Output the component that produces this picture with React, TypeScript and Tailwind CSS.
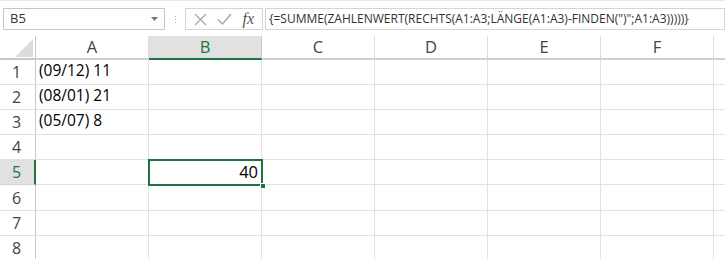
import React from "react";

const COLS = ["A", "B", "C", "D", "E", "F", "G"];
const COLW = [113, 113, 113, 113, 113, 113, 30];
const ROWH = [25, 25, 25, 25, 25, 26, 25, 25];

const cellData: Record<string, string> = {
  "1-A": "(09/12) 11",
  "2-A": "(08/01) 21",
  "3-A": "(05/07) 8",
  "5-B": "40",
};

export default function App() {
  return (
    <div
      className="relative w-[725px] h-[259px] overflow-hidden bg-white"
      style={{ fontFamily: '"Open Sans", "Noto Sans", sans-serif' }}
    >
      {/* formula bar */}
      <div className="h-[36px] border-t border-[#e8e8e8] flex items-start pt-[7px]">
        <div className="ml-[3px] w-[162px] h-[22px] border border-[#c6c6c6] flex items-center justify-between pl-[6px] pr-[6px] text-[13px] text-[#333]">
          <span>B5</span>
          <svg width="7" height="4" viewBox="0 0 7 4">
            <path d="M0 0 L7 0 L3.5 4 Z" fill="#777" />
          </svg>
        </div>
        <div className="w-[20px] h-[22px] flex flex-col items-center justify-center gap-[2px]">
          <div className="w-[1px] h-[1px] bg-[#b0b0b0]" />
          <div className="w-[1px] h-[1px] bg-[#b0b0b0]" />
          <div className="w-[1px] h-[1px] bg-[#b0b0b0]" />
        </div>
        <div className="w-[78px] h-[22px] border border-[#d4d4d4] flex items-center justify-between px-[8px]">
          <svg width="13" height="13" viewBox="0 0 13 13">
            <path d="M1 1 L12 12 M12 1 L1 12" stroke="#a6a6a6" strokeWidth="1.3" fill="none" />
          </svg>
          <svg width="15" height="12" viewBox="0 0 15 12">
            <path d="M1 6.5 L5.5 11 L14 1" stroke="#a6a6a6" strokeWidth="1.4" fill="none" />
          </svg>
          <span
            className="text-[16px] italic text-[#555] leading-none"
            style={{ fontFamily: '"Liberation Serif", serif' }}
          >
            fx
          </span>
        </div>
        <div className="ml-[2px] w-[460px] h-[22px] border border-[#d4d4d4] flex items-center pl-[3px] text-[12px] text-[#333] whitespace-nowrap overflow-hidden">
          {'{=SUMME(ZAHLENWERT(RECHTS(A1:A3;LÄNGE(A1:A3)-FINDEN(")";A1:A3)))))}'}
        </div>
      </div>

      {/* grid */}
      <div className="flex flex-col">
        {/* header row */}
        <div className="flex h-[24px]">
          <div className="w-[36px] shrink-0 h-full relative border-r border-b-2 border-[#c8c8c8] border-b-[#c8c8c8]">
            <svg className="absolute left-[15px] top-[3px]" width="18" height="18" viewBox="0 0 18 18">
              <path d="M18 0 L18 18 L0 18 Z" fill="#dcdcdc" />
            </svg>
          </div>
          {COLS.map((c, i) => (
            <div
              key={c}
              className={
                c === "B"
                  ? "shrink-0 h-full flex items-center justify-center text-[16.5px] text-[#217346] bg-[#e1e1e1] border-r border-[#c8c8c8] border-b-2 border-b-[#217346]"
                  : "shrink-0 h-full flex items-center justify-center text-[16.5px] text-[#444] border-r border-[#dcdcdc] border-b-2 border-b-[#d0d0d0]"
              }
              style={{ width: COLW[i] }}
            >
              {c !== "G" ? c : ""}
            </div>
          ))}
        </div>
        {ROWH.map((h, r) => {
          const row = r + 1;
          return (
            <div key={row} className="flex" style={{ height: h }}>
              <div
                className={
                  row === 5
                    ? "w-[36px] shrink-0 h-full flex items-center pl-[12px] text-[16px] text-[#217346] bg-[#e1e1e1] border-r-2 border-r-[#217346] border-b border-b-[#d4d4d4]"
                    : "w-[36px] shrink-0 h-full flex items-center pl-[12px] text-[16px] text-[#444] border-r border-r-[#c8c8c8] border-b border-b-[#e1e1e1]"
                }
              >
                {row}
              </div>
              {COLS.map((c, i) => {
                const v = cellData[`${row}-${c}`];
                const right = c === "B" && row === 5;
                return (
                  <div
                    key={c}
                    className={
                      "shrink-0 h-full border-r border-b border-[#e1e1e1] flex items-end text-black whitespace-nowrap " +
                      (right ? "justify-end pr-[3px] text-[16.5px] pb-0 leading-[24px]" : "pl-[3px] pb-[2px] text-[15.5px]")
                    }
                    style={{ width: COLW[i] }}
                  >
                    {v ?? ""}
                  </div>
                );
              })}
            </div>
          );
        })}
      </div>

      {/* selection */}
      <div className="absolute left-[148px] top-[159px] w-[115px] h-[27px] border-2 border-[#217346] pointer-events-none" />
      <div className="absolute left-[260px] top-[183px] w-[6px] h-[6px] bg-[#217346] border border-white" />
    </div>
  );
}
